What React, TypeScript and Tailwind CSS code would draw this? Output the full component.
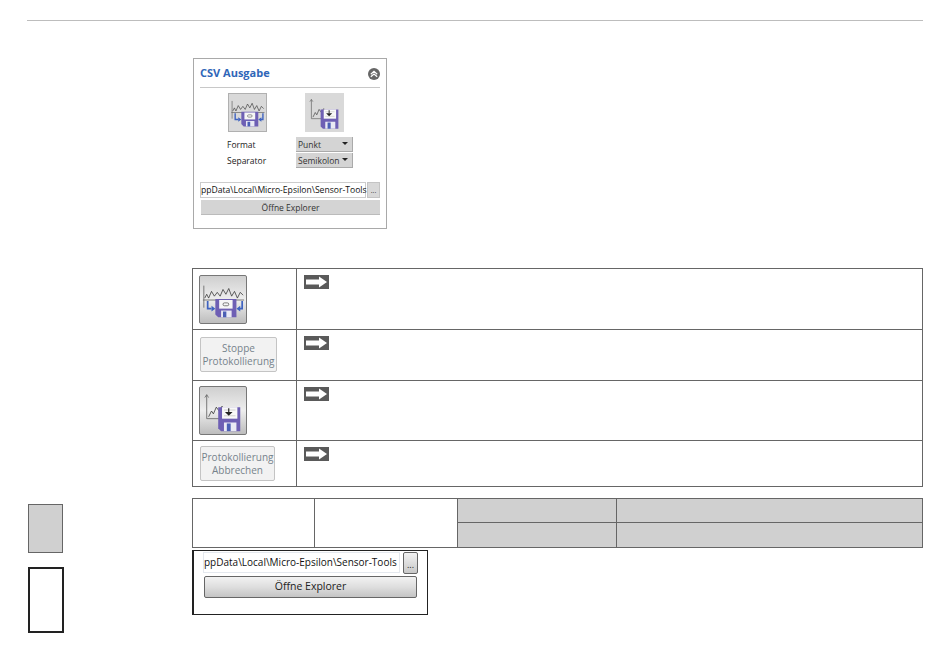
function ContinuousIcon({ size }: { size: number }) {
    return (
        <svg width={size} height={size} viewBox="0 0 48 48" fill="none">
            <path d="M4 9V32M3 24H46" stroke="#666" strokeWidth="0.9" />
            <path d="M5 22L7 18L9 22L12 15L15 20L18 16L21 20L24 13L27 18L30 12L33 20L36 15L39 22L42 16L45 19" stroke="#333" strokeWidth="0.8" />
            <path d="M16 23H38V42H19L16 39Z" fill="#6e5fb4" />
            <rect x="20" y="24" width="14" height="9" fill="#f6f6f6" />
            <rect x="24" y="27" width="6" height="3" rx="1.5" stroke="#444" strokeWidth="0.7" />
            <rect x="22" y="35" width="11" height="7" fill="#e9e9f4" />
            <rect x="24" y="36" width="3.5" height="6" fill="#4b5fb5" />
            <path d="M8 25V33H12M44 25V33H41" stroke="#3f63c0" strokeWidth="1.8" />
            <path d="M12 30L16 33L12 36ZM42 30L38 33L42 36Z" fill="#3f63c0" />
        </svg>
    )
}

function SingleIcon({ size }: { size: number }) {
    return (
        <svg width={size} height={size} viewBox="0 0 48 48" fill="none">
            <path d="M7 7V32H36" stroke="#666" strokeWidth="0.9" />
            <path d="M5 10L7 7L9 10" stroke="#666" strokeWidth="0.8" />
            <path d="M9 30L12 24L14 27L17 20L20 24L23 19L26 24L29 21L33 24" stroke="#333" strokeWidth="0.8" />
            <path d="M19 20H42V45H22L19 42Z" fill="#6e5fb4" />
            <rect x="23" y="20" width="16" height="12" fill="#f8f8f8" />
            <path d="M25 23H37M25 29H37" stroke="#c4c4c4" strokeWidth="0.8" />
            <path d="M30 21V25" stroke="#222" strokeWidth="1.2" />
            <path d="M26 25H34L30 29Z" fill="#222" />
            <rect x="25" y="36" width="13" height="9" fill="#e9e9f4" />
            <rect x="28" y="37" width="4" height="8" fill="#4b5fb5" />
        </svg>
    )
}

function ArrowNote() {
    return (
        <svg width="25" height="14" viewBox="0 0 25 14" className="block">
            <rect width="25" height="14" fill="#5a5a5a" />
            <path d="M2 4.5H15V1.5L23 7L15 12.5V9.5H2Z" fill="#fff" />
        </svg>
    )
}

function Caret() {
    return <span className="absolute right-[4px] top-[5px] w-0 h-0 border-x-[3px] border-x-transparent border-t-[3px] border-t-[#222]" />
}

function Select({ label }: { label: string }) {
    return (
        <div className="relative w-[57px] h-[15px] bg-[#d4d4d4] border-b border-r border-[#aaa] pl-[2px] text-[8.5px] leading-[15px] text-[#333]">
            {label}
            <Caret />
        </div>
    )
}

function CsvPanel() {
    return (
        <div className="w-[194px] h-[171px] border border-[#a9a9a9] px-[6px] pt-[7px]">
            <div className="flex items-center justify-between h-[15px]">
                <span className="text-[11px] font-bold text-[#2f66b8]">CSV Ausgabe</span>
                <svg width="12" height="12" viewBox="0 0 12 12">
                    <circle cx="6" cy="6" r="6" fill="#666" />
                    <path d="M2.8 6.2L6 3.4L9.2 6.2M2.8 8.8L6 6L9.2 8.8" stroke="#fff" strokeWidth="1.2" fill="none" />
                </svg>
            </div>
            <div className="h-px bg-[#c8c8c8] mt-[6px]" />
            <div className="flex mt-[5px] pl-[28px] gap-[38px]">
                <div className="w-[39px] h-[39px] bg-[#d9d9d9] border border-[#b0b0b0] flex items-center justify-center">
                    <ContinuousIcon size={37} />
                </div>
                <div className="w-[39px] h-[39px] bg-[#d9d9d9] flex items-center justify-center">
                    <SingleIcon size={37} />
                </div>
            </div>
            <div className="grid grid-cols-[69px_57px] ml-[27px] mt-[5px] gap-y-px items-center text-[8.5px] text-[#222]">
                <span className="pt-[2px]">Format</span>
                <Select label="Punkt" />
                <span className="pt-px">Separator</span>
                <Select label="Semikolon" />
            </div>
            <div className="flex mt-[14px] gap-[1px]">
                <div className="w-[166px] h-[16px] border border-[#ccc] text-[8.6px] leading-[14px] text-[#111] whitespace-nowrap">ppData\Local\Micro-Epsilon\Sensor-Tools</div>
                <div className="w-[13px] h-[16px] bg-[#d8d8d8] border border-[#c4c4c4] text-[7px] leading-[16px] text-center text-[#333]">...</div>
            </div>
            <div className="h-[15px] bg-[#d4d4d4] border-b border-[#bbb] ml-px mt-[2px] text-center text-[8.5px] leading-[15px] text-[#333]">Öffne Explorer</div>
        </div>
    )
}

function IconButton({ children }: { children: React.ReactNode }) {
    return (
        <div className="w-[48px] h-[49px] rounded-[2px] border border-[#777] bg-gradient-to-b from-[#cfcfcf] via-[#eeeeee] to-[#bdbdbd] flex items-center justify-center">
            {children}
        </div>
    )
}

function TextButton({ lines, w }: { lines: string[], w: string }) {
    return (
        <div className={`${w} h-[35px] rounded-[2px] border border-[#c4c4c4] bg-[#f2f2f2] flex flex-col items-center justify-center text-[10px] leading-[13px] text-[#76838c]`}>
            {lines.map((l) => <span key={l}>{l}</span>)}
        </div>
    )
}

const rows = [
    { h: "h-[61px]", pad: "pt-[6px] pl-[6px]", el: <IconButton><ContinuousIcon size={46} /></IconButton> },
    { h: "h-[51px]", pad: "pt-[7px] pl-[7px]", el: <TextButton w="w-[77px]" lines={["Stoppe", "Protokollierung"]} /> },
    { h: "h-[60px]", pad: "pt-[5px] pl-[6px]", el: <IconButton><SingleIcon size={46} /></IconButton> },
    { h: "h-[46px]", pad: "pt-[5px] pl-[7px]", el: <TextButton w="w-[75px]" lines={["Protokollierung", "Abbrechen"]} /> },
]

function ActionTable() {
    return (
        <div className="w-[731px] border-t border-l border-[#666]">
            {rows.map((r, i) => (
                <div key={i} className={`flex ${r.h} border-b border-r border-[#666]`}>
                    <div className={`w-[104px] border-r border-[#666] ${r.pad}`}>{r.el}</div>
                    <div className="pl-[7px] pt-[6px]"><ArrowNote /></div>
                </div>
            ))}
        </div>
    )
}

function SpecTable() {
    return (
        <div className="w-[731px] h-[50px] flex border border-[#666]">
            <div className="w-[122px] border-r border-[#666]" />
            <div className="w-[143px] border-r border-[#666]" />
            <div className="flex-1 grid grid-cols-[159px_1fr] grid-rows-2 bg-[#d0d0d0]">
                <div className="border-r border-b border-[#666]" />
                <div className="border-b border-[#666]" />
                <div className="border-r border-[#666]" />
                <div />
            </div>
        </div>
    )
}

function ExplorerShot() {
    return (
        <div className="w-[236px] h-[65px] border border-[#222] border-l-2 pl-[9px] pt-px">
            <div className="flex gap-[3px]">
                <div className="w-[197px] h-[21px] border border-[#e4e8ee] text-[10px] leading-[19px] text-[#111] whitespace-nowrap">ppData\Local\Micro-Epsilon\Sensor-Tools</div>
                <div className="w-[15px] h-[22px] rounded-[2px] border border-[#666] bg-gradient-to-b from-[#f2f2f2] to-[#c8c8c8] text-[9px] leading-[24px] text-center text-[#222]">...</div>
            </div>
            <div className="w-[213px] h-[22px] mt-[2px] ml-px rounded-[2px] border border-[#666] bg-gradient-to-b from-[#f2f2f2] via-[#dedede] to-[#c4c4c4] text-center text-[10.5px] leading-[19px] text-[#222]">Öffne Explorer</div>
        </div>
    )
}

export default function App() {
    return (
        <div className="w-[950px] h-[657px] bg-white pt-[20px] font-['Open_Sans',sans-serif]">
            <div className="mx-[27px] h-px bg-[#bdbdbd]" />
            <div className="ml-[193px] mt-[37px]"><CsvPanel /></div>
            <div className="ml-[192px] mt-[39px]"><ActionTable /></div>
            <div className="flex mt-[11px]">
                <div className="w-[192px] pl-[28px] pt-[6px]">
                    <div className="w-[35px] h-[49px] bg-[#d0d0d0] border border-[#666]" />
                    <div className="w-[36px] h-[66px] mt-[14px] border-2 border-[#222]" />
                </div>
                <div>
                    <SpecTable />
                    <div className="mt-[2px]"><ExplorerShot /></div>
                </div>
            </div>
        </div>
    )
}
